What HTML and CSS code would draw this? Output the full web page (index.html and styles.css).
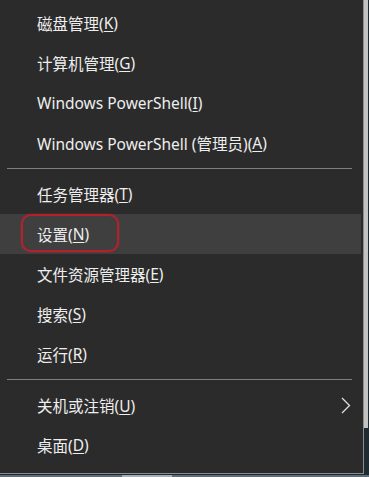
FILE: index.html
```html
<!DOCTYPE html>
<html lang="zh-CN">
<head>
<meta charset="utf-8">
<title>Menu</title>
<link rel="stylesheet" href="styles.css">
</head>
<body>
<div class="screen">
  <div class="frame">
    <div class="menu">
      <div class="group">
        <div class="item">磁盘管理(<u>K</u>)</div>
        <div class="item">计算机管理(<u>G</u>)</div>
        <div class="item">Windows PowerShell(<u>I</u>)</div>
        <div class="item">Windows PowerShell (管理员)(<u>A</u>)</div>
      </div>
      <div class="sep"></div>
      <div class="group">
        <div class="item">任务管理器(<u>T</u>)</div>
        <div class="item hover">设置(<u>N</u>)<span class="mark"></span></div>
        <div class="item">文件资源管理器(<u>E</u>)</div>
        <div class="item">搜索(<u>S</u>)</div>
        <div class="item">运行(<u>R</u>)</div>
      </div>
      <div class="sep"></div>
      <div class="group">
        <div class="item sub"><span>关机或注销(<u>U</u>)</span>
          <svg class="chev" width="10" height="17" viewBox="0 0 10 17"><polyline points="1,1 8.5,8.5 1,16" fill="none" stroke="#e0e0e0" stroke-width="1.3"/></svg>
        </div>
        <div class="item">桌面(<u>D</u>)</div>
      </div>
    </div>
    <div class="edge"></div>
  </div>
  <div class="bottom"><span class="seg"></span></div>
</div>
</body>
</html>
```
FILE: styles.css
```css
html, body {
  margin: 0;
  padding: 0;
  background: #1d2a30;
}
.screen {
  width: 369px;
  height: 477px;
  overflow: hidden;
}
.frame {
  display: flex;
  height: 475px;
}
.menu {
  width: 364px;
  height: 474px;
  box-sizing: border-box;
  background: #2b2b2b;
  border-right: 1px solid #8c8c8c;
  border-bottom: 1px solid #8c8c8c;
  padding-top: 3px;
  font-family: "Segoe UI", "Noto Sans", "Noto Sans CJK SC", sans-serif;
  font-size: 15.5px;
  color: #eeeeee;
}
.edge {
  width: 4px;
  height: 475px;
  background: linear-gradient(to bottom, #c2c2c2 0, #c2c2c2 428px, #1e2b31 428px);
}
.item {
  position: relative;
  height: 40px;
  display: flex;
  align-items: center;
  padding-left: 37px;
  white-space: nowrap;
}
.item u {
  text-decoration-thickness: 1px;
  text-underline-offset: 2px;
}
.hover {
  background: #3f3f3f;
  margin-right: 2px;
}
.mark {
  position: absolute;
  left: 21px;
  top: 0;
  width: 98px;
  height: 38px;
  box-sizing: border-box;
  border: 2px solid #b3222c;
  border-radius: 10px;
  box-shadow: 0 0 2px rgba(200, 40, 50, 0.6);
}
.sep {
  height: 1px;
  background: #7e7e7e;
  margin: 5px 11px 5px 7px;
}
.group:last-child {
  padding-bottom: 8px;
}
.sub {
  justify-content: space-between;
  padding-right: 12px;
}
.chev {
  display: block;
}
.bottom {
  position: relative;
  height: 2px;
  background: #5e6e7a;
}
.seg {
  position: absolute;
  left: 122px;
  top: 0;
  width: 50px;
  height: 2px;
  background: #a3b0ba;
}
```
